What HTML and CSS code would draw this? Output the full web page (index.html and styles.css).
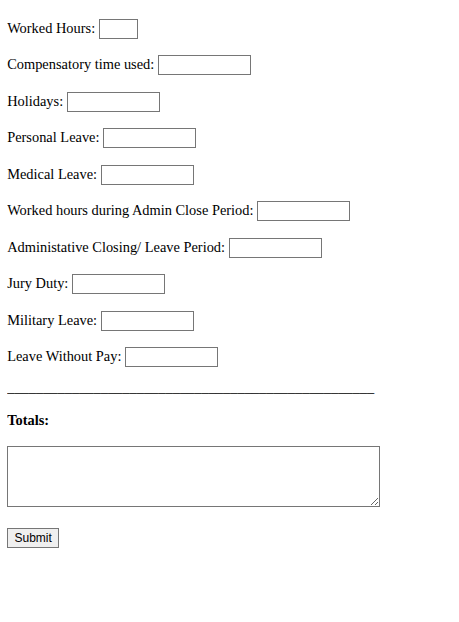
FILE: index.html
```html
<!DOCTYPE html>
<html lang="en">
<head>
<meta charset="utf-8">
<title>Timesheet</title>
<link rel="stylesheet" href="styles.css">
</head>
<body>
<form class="sheet">
  <div class="row"><label class="label" for="f1">Worked Hours:</label><input class="field field-sm" id="f1" type="text"></div>
  <div class="row"><label class="label" for="f2">Compensatory time used:</label><input class="field" id="f2" type="text"></div>
  <div class="row"><label class="label" for="f3">Holidays:</label><input class="field" id="f3" type="text"></div>
  <div class="row"><label class="label" for="f4">Personal Leave:</label><input class="field" id="f4" type="text"></div>
  <div class="row"><label class="label" for="f5">Medical Leave:</label><input class="field" id="f5" type="text"></div>
  <div class="row"><label class="label" for="f6">Worked hours during Admin Close Period:</label><input class="field" id="f6" type="text"></div>
  <div class="row"><label class="label" for="f7">Administative Closing/ Leave Period:</label><input class="field" id="f7" type="text"></div>
  <div class="row"><label class="label" for="f8">Jury Duty:</label><input class="field" id="f8" type="text"></div>
  <div class="row"><label class="label" for="f9">Military Leave:</label><input class="field" id="f9" type="text"></div>
  <div class="row"><label class="label" for="f10">Leave Without Pay:</label><input class="field" id="f10" type="text"></div>
  <div class="rule">___________________________________________________</div>
  <div class="totals">Totals:</div>
  <textarea class="notes"></textarea>
  <div class="actions"><button class="submit" type="submit">Submit</button></div>
</form>
</body>
</html>
```
FILE: styles.css
```css
html, body {
  background: #ffffff;
}
body {
  margin: 7.2px;
  font-family: "Liberation Serif", "Times New Roman", serif;
  font-size: 14.4px;
  color: #000000;
}
.sheet {
  display: flex;
  flex-direction: column;
  align-items: flex-start;
  padding-top: 11.6px;
}
.row {
  display: flex;
  align-items: center;
  gap: 3.6px;
  height: 20.44px;
  margin-top: 16px;
}
.row:first-child {
  margin-top: 0;
}
.label {
  line-height: 17px;
  margin-bottom: 1px;
  white-space: nowrap;
}
.field {
  box-sizing: border-box;
  width: 93px;
  height: 20px;
  margin: 0;
  padding: 1px 2px;
  border: 1px solid #767676;
  border-radius: 0;
  background: #ffffff;
  font-family: "Liberation Sans", Arial, sans-serif;
  font-size: 12px;
}
.field-sm {
  width: 39px;
}
.rule {
  margin-top: 12.2px;
  line-height: normal;
  white-space: nowrap;
}
.totals {
  margin-top: 16px;
  font-weight: bold;
  line-height: normal;
}
.notes {
  box-sizing: border-box;
  display: block;
  width: 373px;
  height: 61px;
  margin: 17px 0 0;
  padding: 2px;
  border: 1px solid #767676;
  border-radius: 0;
  background: #ffffff;
  font-family: "Liberation Mono", monospace;
  font-size: 12px;
}
.actions {
  margin-top: 20.5px;
}
.submit {
  box-sizing: border-box;
  width: 52px;
  height: 20px;
  margin: 0;
  padding: 0 5px;
  border: 1px solid #767676;
  border-radius: 0;
  background: #efefef;
  color: #000000;
  font-family: "Liberation Sans", Arial, sans-serif;
  font-size: 12px;
  line-height: 16px;
}
```
